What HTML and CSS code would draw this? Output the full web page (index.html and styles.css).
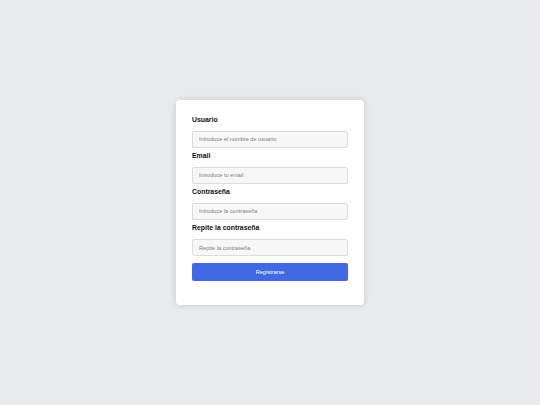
FILE: index.html
```html
<!DOCTYPE html>
<html lang="es">
<head>
<meta charset="utf-8">
<title>Registro</title>
<link rel="stylesheet" href="styles.css">
</head>
<body>
<main class="page">
  <form class="card">
    <label class="label" for="u">Usuario</label>
    <input class="input" id="u" type="text" placeholder="Introduce el nombre de usuario">
    <label class="label" for="e">Email</label>
    <input class="input" id="e" type="email" placeholder="Introduce tu email">
    <label class="label" for="p">Contraseña</label>
    <input class="input" id="p" type="password" placeholder="Introduce la contraseña">
    <label class="label" for="p2">Repite la contraseña</label>
    <input class="input" id="p2" type="password" placeholder="Repite la contraseña">
    <button class="button" type="button">Registrarse</button>
  </form>
</main>
</body>
</html>
```

FILE: styles.css
```css
html, body {
  margin: 0;
  padding: 0;
  height: 100%;
}
body {
  background: #e9eaee;
  font-family: "Liberation Sans", Arial, sans-serif;
}
.page {
  height: 100vh;
  display: flex;
  align-items: center;
  justify-content: center;
}
.card {
  width: 188px;
  box-sizing: border-box;
  padding: 16px 16px 24px;
  background: #fff;
  border-radius: 4px;
  box-shadow: 0 0 6px rgba(0, 0, 0, 0.14);
  display: flex;
  flex-direction: column;
}
.label {
  display: block;
  font-size: 6.9px;
  line-height: 7.8px;
  font-weight: bold;
  color: #111;
  margin-bottom: 7px;
}
.input {
  display: block;
  box-sizing: border-box;
  width: 100%;
  height: 17.3px;
  margin: 0 0 4px;
  padding: 0 6px;
  border: 1px solid #dcdcdc;
  border-radius: 2px;
  background: #f7f7f7;
  font-family: "Liberation Sans", Arial, sans-serif;
  font-size: 5.6px;
  color: #333;
  outline: none;
}
.input::placeholder {
  color: #808080;
}
.input:last-of-type {
  margin-bottom: 7px;
}
.button {
  display: block;
  width: 100%;
  height: 18px;
  margin: 0;
  padding: 0;
  border: none;
  border-radius: 2px;
  background: #4169e1;
  color: #fff;
  font-family: "Liberation Sans", Arial, sans-serif;
  font-size: 5.6px;
}
```
